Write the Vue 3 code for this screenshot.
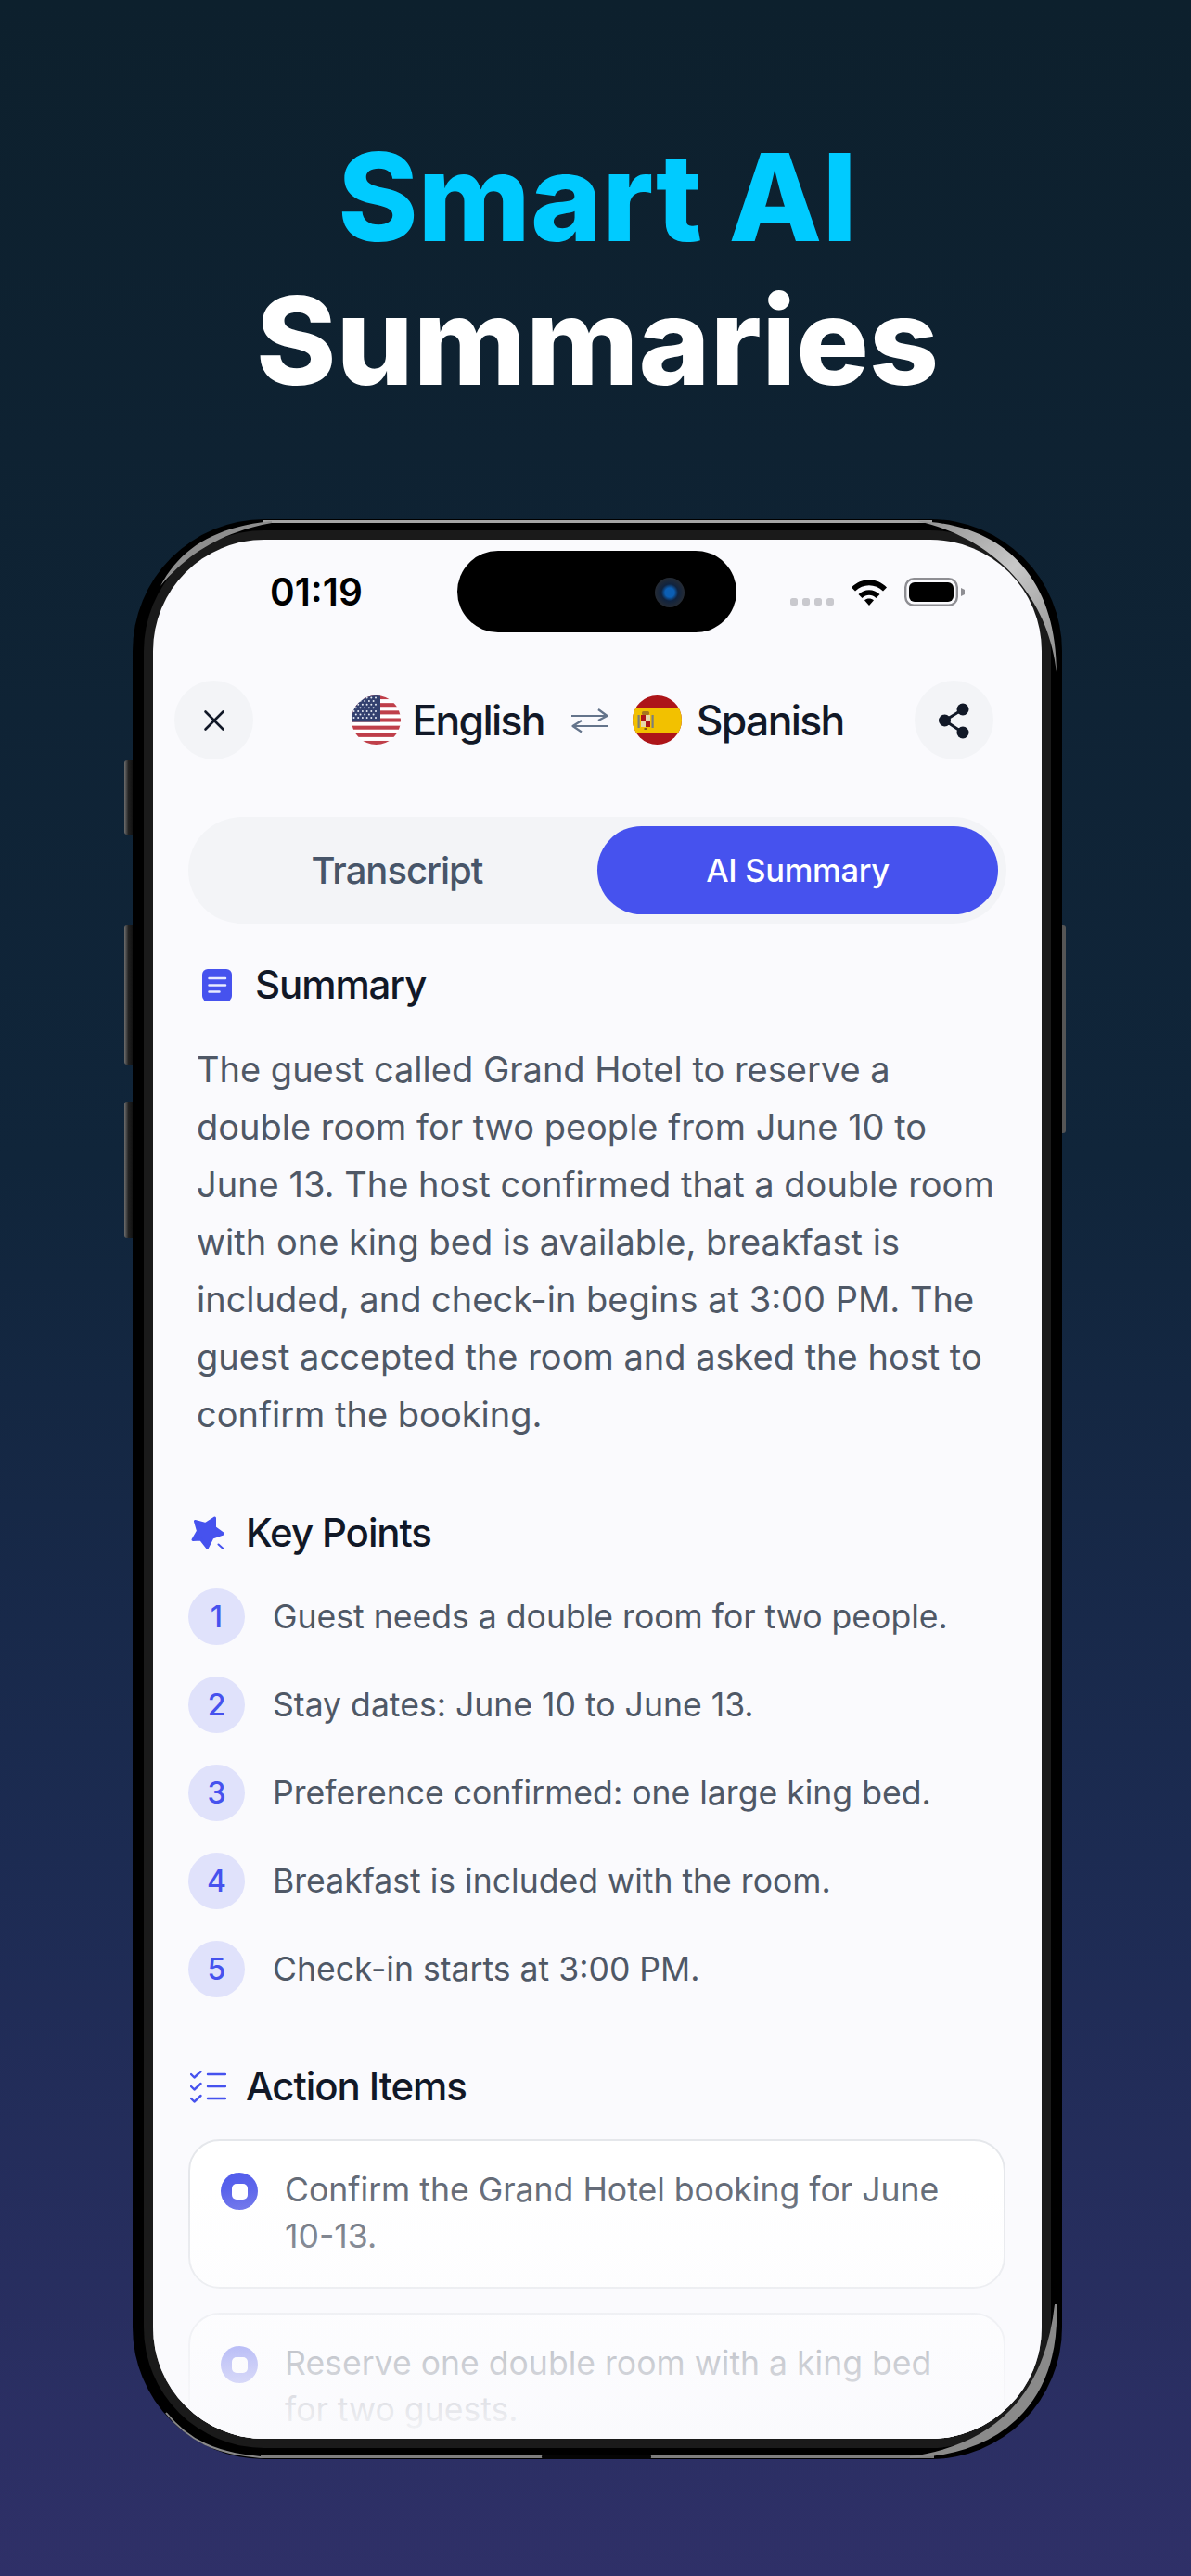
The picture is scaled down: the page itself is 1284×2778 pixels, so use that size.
<script setup>
const points = [
  'Guest needs a double room for two people.',
  'Stay dates: June 10 to June 13.',
  'Preference confirmed: one large king bed.',
  'Breakfast is included with the room.',
  'Check-in starts at 3:00 PM.'
]
const actions = [
  'Confirm the Grand Hotel booking for June 10-13.',
  'Reserve one double room with a king bed for two guests.'
]
const stripes = [0, 2, 4, 6, 8, 10, 12].map((n) => n * 4.08)
const stars = []
for (let r = 0; r < 7; r++) {
  for (let c = 0; c < (r % 2 ? 5 : 6); c++) {
    stars.push({ x: 2.5 + c * 4.7 + (r % 2 ? 2.3 : 0), y: 2.5 + r * 3.6 })
  }
}
</script>

<template>
  <div class="page">
    <h1 class="headline">
      <span class="accent">Smart AI</span>
      <span>Summaries</span>
    </h1>

    <div class="phone">
      <i class="btn btn-silent"></i>
      <i class="btn btn-up"></i>
      <i class="btn btn-down"></i>
      <i class="btn btn-power"></i>

      <div class="ring">
        <div class="screen">
          <div class="island"><i class="camera"></i></div>

          <div class="status">
            <span class="time">01:19</span>
            <div class="status-right">
              <div class="signal"><i></i><i></i><i></i><i></i></div>
              <svg class="wifi" width="40" height="29" viewBox="0 0 40 29">
                <path d="M1 9.5C11.5 -1.5 28.5 -1.5 39 9.5L35 13.5C26.5 5 13.5 5 5 13.5Z" />
                <path d="M8.5 17C15 10.6 25 10.6 31.5 17L27.5 21C23 16.8 17 16.8 12.5 21Z" />
                <path d="M15 23.2C17.8 21 22.2 21 25 23.2L20 29Z" />
              </svg>
              <svg class="battery" width="65" height="31" viewBox="0 0 65 31">
                <rect x="1.2" y="1.2" width="55.6" height="28.6" rx="9" fill="none" stroke="#8e8e93" stroke-width="2.4" />
                <rect x="5" y="5" width="48" height="21" rx="6" fill="#000" />
                <path d="M61 11L65 13V18L61 20Z" fill="#8e8e93" />
              </svg>
            </div>
          </div>

          <header class="topbar">
            <button class="round">
              <svg width="24" height="24" viewBox="0 0 24 24">
                <path d="M2.5 2.5L21.5 21.5M21.5 2.5L2.5 21.5" stroke="#111827" stroke-width="2.6" stroke-linecap="round" />
              </svg>
            </button>
            <div class="langs">
              <svg class="flag" width="53" height="53" viewBox="0 0 53 53">
                <defs><clipPath id="fc"><circle cx="26.5" cy="26.5" r="26.5" /></clipPath></defs>
                <g clip-path="url(#fc)">
                  <rect width="53" height="53" fill="#fff" />
                  <rect v-for="y in stripes" :key="y" x="0" :y="y" width="53" height="4.08" fill="#bf3f4a" />
                  <rect width="31" height="28.5" fill="#33406f" />
                  <circle v-for="s in stars" :key="s.x + '-' + s.y" :cx="s.x" :cy="s.y" r="1" fill="#e8ecf4" />
                </g>
              </svg>
              <span class="lang lang-en">English</span>
              <svg class="swap" width="40" height="26" viewBox="0 0 40 26">
                <path d="M0 8H38M29 1L38.5 8L29 13M40 19H2M11 13L1.5 19L11 25.5" fill="none" stroke="#64748b" stroke-width="2.2" stroke-linejoin="round" />
              </svg>
              <svg class="flag" width="53" height="53" viewBox="0 0 53 53">
                <defs><clipPath id="fe"><circle cx="26.5" cy="26.5" r="26.5" /></clipPath></defs>
                <g clip-path="url(#fe)">
                  <rect width="53" height="53" fill="#ad1519" />
                  <rect y="13" width="53" height="27" fill="#f2c100" />
                  <rect x="10" y="17" width="8" height="4" rx="1.5" fill="#a7771d" />
                  <rect x="9" y="21" width="5" height="6" fill="#ad1519" />
                  <rect x="14" y="21" width="5" height="6" fill="#e8d9a8" />
                  <rect x="9" y="27" width="5" height="7" fill="#e8d9a8" />
                  <rect x="14" y="27" width="5" height="7" fill="#ad1519" />
                  <rect x="5.5" y="21" width="2.2" height="14" fill="#7d7f7a" />
                  <rect x="20.5" y="21" width="2.2" height="14" fill="#7d7f7a" />
                  <rect x="12.5" y="35" width="3" height="2" fill="#8b5a14" />
                </g>
              </svg>
              <span class="lang">Spanish</span>
            </div>
            <button class="round">
              <svg width="34" height="40" viewBox="0 0 34 40">
                <path d="M7.5 20L27 8M7.5 20L27 33" stroke="#111827" stroke-width="3" />
                <circle cx="7.5" cy="20" r="6.5" fill="#111827" />
                <circle cx="27" cy="8" r="6.5" fill="#111827" />
                <circle cx="27" cy="33" r="6.5" fill="#111827" />
              </svg>
            </button>
          </header>

          <div class="tabs">
            <span class="tab">Transcript</span>
            <span class="tab tab-on">AI Summary</span>
          </div>

          <main class="content">
            <section class="summary">
              <h2 class="heading heading-summary">
                <svg width="32" height="35" viewBox="0 0 32 35">
                  <rect width="32" height="35" rx="6" fill="#4652ee" />
                  <path d="M7.5 10H25M7.5 17.5H25M7.5 24.5H18.5" stroke="#e9ebff" stroke-width="2.5" stroke-linecap="round" />
                </svg>
                <span>Summary</span>
              </h2>
              <p class="body">The guest called Grand Hotel to reserve a double room for two people from June 10 to June 13. The host confirmed that a double room with one king bed is available, breakfast is included, and check-in begins at 3:00 PM. The guest accepted the room and asked the host to confirm the booking.</p>
            </section>

            <section class="keys">
              <h2 class="heading heading-keys">
                <svg width="37" height="36" viewBox="0 0 37 36">
                  <path d="M4.5 5.5L15.5 8.5L25.5 2L25.5 12.5L34.5 19L23 23L17.5 34L10.5 25L2 25.5L7.5 16Z" fill="#4652ee" stroke="#4652ee" stroke-width="3" stroke-linejoin="round" />
                  <path d="M29.5 30.5L34.5 35" stroke="#4652ee" stroke-width="2" stroke-linecap="round" />
                </svg>
                <span>Key Points</span>
              </h2>
              <ul class="points">
                <li v-for="(p, i) in points" :key="p" class="point">
                  <span class="num">{{ i + 1 }}</span>
                  <span class="point-text">{{ p }}</span>
                </li>
              </ul>
            </section>

            <section class="actions">
              <h2 class="heading heading-actions">
                <svg width="39" height="35" viewBox="0 0 39 35">
                  <g fill="none" stroke="#4652ee" stroke-width="2.4" stroke-linecap="round" stroke-linejoin="round">
                    <path d="M1 4L4.5 7.5L11.5 1M1 17L4.5 20.5L11.5 14M1 30L4.5 33.5L11.5 27" />
                    <path d="M19 4H38M19 17H38M19 30H38" />
                  </g>
                </svg>
                <span>Action Items</span>
              </h2>
              <div v-for="a in actions" :key="a" class="card">
                <span class="dot"><i></i></span>
                <span class="card-text">{{ a }}</span>
              </div>
            </section>
          </main>

          <div class="fade"></div>
        </div>
      </div>

      <svg class="shine" width="1002" height="2092" viewBox="0 0 1002 2092">
        <defs>
          <linearGradient id="sh" x1="0" y1="0" x2="1" y2="1">
            <stop offset="0" stop-color="#8f8f8f" />
            <stop offset="0.5" stop-color="#c8c8c8" />
            <stop offset="1" stop-color="#8a8a8a" />
          </linearGradient>
        </defs>
        <path d="M140 2.5H862" stroke="#a3a3a3" stroke-width="3" />
        <path d="M846 2C941 5 996 65 996 165C988 85 930 20 846 2Z" fill="url(#sh)" />
        <path d="M150 2C90 8 52 30 30 72C60 36 96 14 150 4Z" fill="#8e8e8e" />
        <path d="M138 2089.5H864" stroke="#7e7e7e" stroke-width="3" />
        <path d="M995 1925C999 2020 948 2085 838 2090C928 2078 984 2025 995 1925Z" fill="#8a8a8a" stroke="#8a8a8a" stroke-width="2" />
        <path d="M36 2042C60 2072 90 2086 138 2090" fill="none" stroke="#8a8a8a" stroke-width="2" />
        <rect x="441" y="2087" width="118" height="5" rx="2.5" fill="#050505" />
      </svg>
    </div>
  </div>
</template>

<style scoped>
.page {
  width: 1284px;
  height: 2778px;
  overflow: hidden;
  background: linear-gradient(180deg, #0d202d 0%, #10253a 45%, #1c2b52 72%, #2f3068 100%);
  font-family: Inter, "Noto Sans", sans-serif;
  display: flex;
  flex-direction: column;
  align-items: flex-start;
}
.headline {
  width: 100%;
  box-sizing: border-box;
  margin: 0;
  padding: 135px 0 0 4px;
  display: flex;
  flex-direction: column;
  align-items: center;
  color: #fff;
  font-size: 131px;
  line-height: 155px;
  font-weight: 800;
}
.accent { color: #00cbff; }

.phone {
  position: relative;
  width: 1002px;
  height: 2092px;
  margin: 115px 0 0 143px;
  box-sizing: border-box;
  padding: 12px;
  border-radius: 142px;
  background: #000;
}
.btn {
  position: absolute;
  display: block;
  left: -9px;
  width: 9px;
  background: linear-gradient(90deg, #6e6e6e, #222 50%, #111);
  border-radius: 3px 0 0 3px;
}
.btn-silent { top: 260px; height: 80px; }
.btn-up { top: 438px; height: 150px; }
.btn-down { top: 628px; height: 147px; }
.btn-power {
  left: auto;
  right: -4px;
  width: 4px;
  top: 438px;
  height: 224px;
  background: #555;
  border-radius: 0 3px 3px 0;
}
.ring {
  height: 100%;
  box-sizing: border-box;
  padding: 10px;
  border-radius: 130px;
  background: #1a1a1a;
}
.screen {
  position: relative;
  height: 100%;
  overflow: hidden;
  border-radius: 120px;
  background: #fafafd;
}
.island {
  position: absolute;
  left: 328px;
  top: 12px;
  width: 301px;
  height: 88px;
  border-radius: 44px;
  background: #000;
}
.camera {
  position: absolute;
  display: block;
  left: 213px;
  top: 29px;
  width: 32px;
  height: 32px;
  border-radius: 50%;
  background: radial-gradient(circle at 50% 50%, #0c5fb4 0 22%, #10233f 40%, #262b33 72%, #30343a 100%);
}
.status {
  height: 152px;
  box-sizing: border-box;
  padding: 35px 83px 0 126px;
  display: flex;
  justify-content: space-between;
  align-items: flex-start;
}
.time {
  font-size: 40.5px;
  line-height: 44px;
  font-weight: 600;
  color: #000;
}
.status-right {
  display: flex;
  align-items: center;
  gap: 18px;
  padding-top: 6px;
}
.signal {
  display: flex;
  gap: 5px;
  margin-top: 20px;
}
.signal i {
  display: block;
  width: 8px;
  height: 8px;
  border-radius: 2.5px;
  background: #c9c9ce;
}
.wifi path { fill: #000; }

.topbar {
  display: flex;
  align-items: center;
  justify-content: space-between;
  padding: 0 52px 0 23px;
}
.round {
  width: 85px;
  height: 85px;
  padding: 0;
  border: 0;
  border-radius: 50%;
  background: #f3f4f7;
  display: flex;
  align-items: center;
  justify-content: center;
}
.langs {
  margin-left: 30px;
  display: flex;
  align-items: center;
}
.flag { display: block; }
.lang {
  margin-left: 16px;
  font-size: 44.5px;
  line-height: 54px;
  font-weight: 500;
  letter-spacing: -1.7px;
  color: #111827;
}
.lang-en { margin-left: 12px; }
.swap { margin: 0 26px 0 29px; display: block; }

.tabs {
  width: 882px;
  height: 115px;
  margin: 62px 0 0 38px;
  box-sizing: border-box;
  padding: 10px 9px;
  border-radius: 58px;
  background: #f3f4f7;
  display: grid;
  grid-template-columns: 1fr 1fr;
}
.tab {
  display: flex;
  align-items: center;
  justify-content: center;
  border-radius: 48px;
  font-size: 40px;
  font-weight: 500;
  letter-spacing: -1px;
  color: #475569;
}
.tab-on {
  background: #4652ee;
  color: #fff;
  font-size: 34.5px;
  letter-spacing: -0.3px;
}

.content { padding: 41px 39px 0 38px; }
.heading {
  margin: 0;
  height: 50px;
  display: flex;
  align-items: center;
  font-size: 42px;
  line-height: 50px;
  font-weight: 500;
  letter-spacing: -1.1px;
  color: #111827;
}
.heading-summary { padding-left: 15px; gap: 25px; }
.heading-keys { padding-left: 3px; gap: 22px; }
.heading-actions { padding-left: 2px; gap: 21px; }
.body {
  margin: 35px 0 0 9px;
  width: 870px;
  font-size: 38px;
  line-height: 62px;
  color: #4f5866;
}
.keys { margin-top: 72px; }
.points {
  list-style: none;
  margin: 35px 0 0;
  padding: 0;
  display: flex;
  flex-direction: column;
  gap: 34px;
}
.point {
  display: flex;
  align-items: center;
  gap: 30px;
  height: 61px;
}
.num {
  width: 61px;
  height: 61px;
  border-radius: 50%;
  background: #e0e2fb;
  color: #4652ee;
  display: flex;
  align-items: center;
  justify-content: center;
  font-size: 32px;
  font-weight: 500;
}
.point-text {
  font-size: 35.6px;
  color: #4f5866;
}
.actions { margin-top: 71px; }
.actions .heading { margin-bottom: 32px; }
.card {
  box-sizing: border-box;
  min-height: 160px;
  margin-bottom: 26px;
  padding: 28px 40px 29px 33px;
  border: 2px solid #e5e7eb;
  border-radius: 34px;
  background: #fff;
  display: flex;
  align-items: flex-start;
  gap: 29px;
}
.dot {
  flex: none;
  width: 40px;
  height: 40px;
  margin-top: 6px;
  border-radius: 50%;
  background: linear-gradient(160deg, #4f5aec, #6a70ea);
  display: flex;
  align-items: center;
  justify-content: center;
}
.dot i {
  display: block;
  width: 17px;
  height: 17px;
  border-radius: 5px;
  background: #fff;
}
.card-text {
  font-size: 35.6px;
  line-height: 50px;
  color: #656c78;
}
.fade {
  position: absolute;
  left: 0;
  right: 0;
  bottom: 0;
  height: 270px;
  background: linear-gradient(180deg, rgba(250, 250, 253, 0), rgba(250, 250, 253, 0.98));
  pointer-events: none;
}
.shine {
  position: absolute;
  left: 0;
  top: 0;
  pointer-events: none;
}
</style>

<style>
html, body { margin: 0; background: #0d202d; }
</style>
